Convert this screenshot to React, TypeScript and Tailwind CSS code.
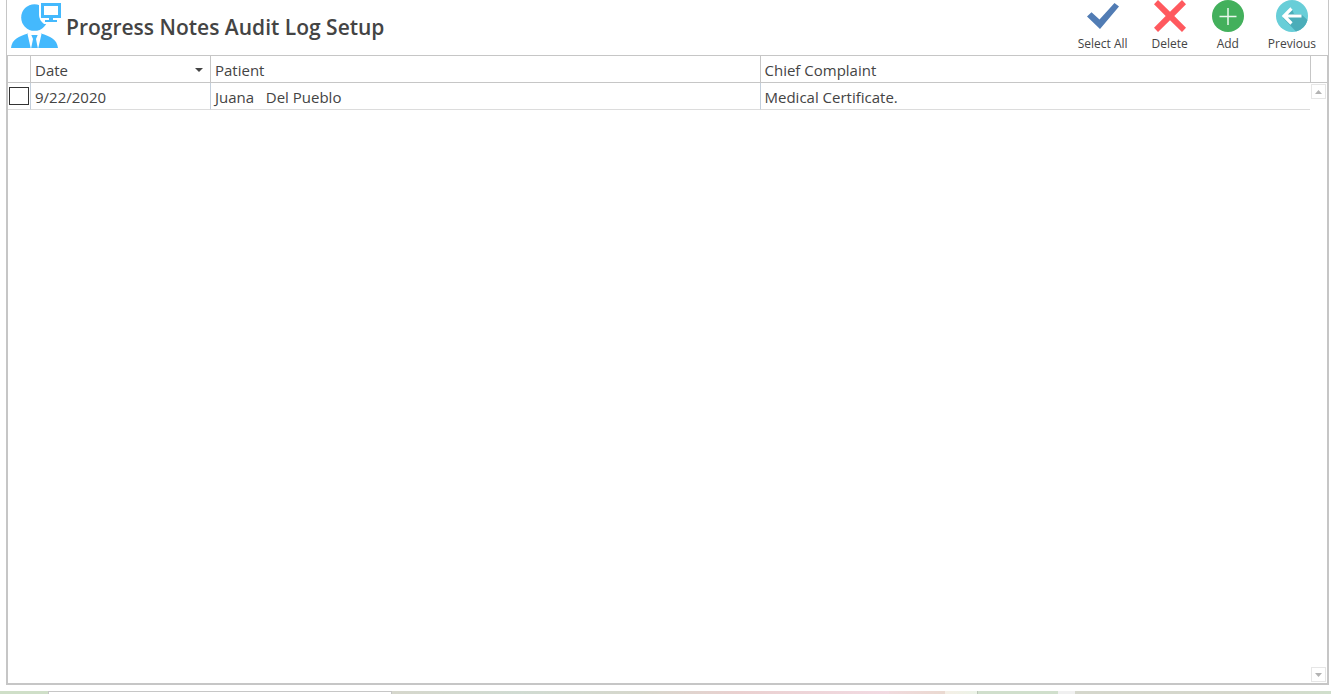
import { useState, type ReactNode } from "react";

type Note = { id: number; date: string; patient: string; complaint: string };

const initialNotes: Note[] = [
  { id: 1, date: "9/22/2020", patient: "Juana   Del Pueblo", complaint: "Medical Certificate." },
];

function DoctorIcon() {
  return (
    <svg width="50" height="46" viewBox="0 0 50 46" className="shrink-0" aria-hidden="true">
      <circle cx="23.500" cy="14.500" r="13.300" fill="#44b9fd" />
      <path d="M0 45C1 36 8 33.500 17 30.500L21 45ZM47 45C46 36 39 33.500 30 30.500L26 45Z" fill="#44b9fd" />
      <path d="M16.500 31H30.500L27.300 45H19.700Z" fill="#fff" />
      <path d="M20.300 32H26.700L25 36L26.800 45H20.200L22 36Z" fill="#44b9fd" />
      <path d="M28 0H50V21H33Q28 17 28 12Z" fill="#fff" />
      <path d="M30 0H50V15H42V17H46V19H34V17H38V15H30ZM33 3V12H47V3Z" fill="#44b9fd" fillRule="evenodd" />
    </svg>
  );
}

function CheckIcon() {
  return (
    <svg width="32" height="32" viewBox="0 0 32 32" aria-hidden="true">
      <path d="M0 16.500L4.500 12.300L12.500 19.500L27.500 3L32 6.500L13 29Z" fill="#517cb4" />
    </svg>
  );
}

function CrossIcon() {
  return (
    <svg width="32" height="32" viewBox="0 0 32 32" aria-hidden="true">
      <path d="M4 0L16 11.800L28 0L32 4.200L20.300 16L32 27.800L28 32L16 20.200L4 32L0 27.800L11.700 16L0 4.200Z" fill="#ff595e" />
    </svg>
  );
}

function AddIcon() {
  return (
    <svg width="32" height="32" viewBox="0 0 32 32" aria-hidden="true">
      <circle cx="16" cy="16" r="16" fill="#43b05c" />
      <path d="M16 8V25M7.500 16.500H24.500" stroke="#e9f7ec" strokeWidth="1.500" />
    </svg>
  );
}

function PreviousIcon() {
  return (
    <svg width="32" height="32" viewBox="0 0 32 32" aria-hidden="true">
      <circle cx="16" cy="16" r="16" fill="#68ced8" />
      <path d="M15.500 8L18 14H25L31.500 20A16 16 0 0 1 20 31.500L7 18Z" fill="#4badb9" />
      <path d="M15.500 8.500L8 16L15.500 23.500M8.500 16H25.500" fill="none" stroke="#fff" strokeWidth="3.200" />
    </svg>
  );
}

function ToolButton({ label, children, onClick }: { label: string; children: ReactNode; onClick?: () => void }) {
  return (
    <button type="button" onClick={onClick} className="flex flex-col items-center gap-1 text-xs leading-4">
      {children}
      <span>{label}</span>
    </button>
  );
}

function ScrollButton({ label, path }: { label: string; path: string }) {
  return (
    <button type="button" aria-label={label} className="flex size-[15px] items-center justify-center border border-[#e6e6e6]">
      <svg width="7" height="4" viewBox="0 0 7 4" aria-hidden="true">
        <path d={path} fill="#b3b3b3" />
      </svg>
    </button>
  );
}

export default function App() {
  const [notes, setNotes] = useState(initialNotes);
  const [selected, setSelected] = useState<number[]>([]);

  const toggle = (id: number) =>
    setSelected((ids) => (ids.includes(id) ? ids.filter((other) => other !== id) : [...ids, id]));

  return (
    <div className="flex h-screen flex-col overflow-hidden bg-white font-['Open_Sans','Noto_Sans',sans-serif] text-[#444]">
      <main className="mr-0.5 ml-1.5 flex min-h-0 flex-1 flex-col">
        <header className="flex h-[55px] shrink-0 items-start justify-between border-x border-[#c6c6c6] pr-3 pl-1">
          <div className="flex items-start gap-[5px] pt-[3px]">
            <DoctorIcon />
            <h1 className="text-[21px] leading-[48px] font-semibold">Progress Notes Audit Log Setup</h1>
          </div>
          <div className="flex gap-6">
            <ToolButton label="Select All" onClick={() => setSelected(notes.map((note) => note.id))}>
              <CheckIcon />
            </ToolButton>
            <ToolButton label="Delete" onClick={() => setNotes(notes.filter((note) => !selected.includes(note.id)))}>
              <CrossIcon />
            </ToolButton>
            <ToolButton label="Add">
              <AddIcon />
            </ToolButton>
            <ToolButton label="Previous">
              <PreviousIcon />
            </ToolButton>
          </div>
        </header>

        <section className="flex min-h-0 flex-1 border-2 border-t border-[#c6c6c6]">
          <div className="min-w-0 flex-1">
            <table className="w-full table-fixed border-separate border-spacing-0 text-left text-[15px] leading-6">
              <thead>
                <tr>
                  <th className="w-[23px] border-r border-b border-[#c6c6c6] p-0" aria-label="Selected" />
                  <th className="w-[180px] border-r border-b border-[#c6c6c6] p-0 font-normal">
                    <button type="button" className="flex w-full items-center justify-between pt-0.5 pr-[7px] pl-1">
                      <span>Date</span>
                      <svg width="8" height="4" viewBox="0 0 8 4" aria-hidden="true">
                        <path d="M0 0H8L4 4Z" fill="#444" />
                      </svg>
                    </button>
                  </th>
                  <th className="border-r border-b border-[#c6c6c6] px-1 pt-0.5 pb-0 font-normal">Patient</th>
                  <th className="border-b border-[#c6c6c6] px-1 pt-0.5 pb-0 font-normal">Chief Complaint</th>
                </tr>
              </thead>
              <tbody>
                {notes.map((note) => (
                  <tr key={note.id}>
                    <td className="border-r border-b border-[#dcdcdc] border-r-[#c3cfdc] p-0">
                      <input
                        type="checkbox"
                        aria-label={`Select note for ${note.patient}`}
                        checked={selected.includes(note.id)}
                        onChange={() => toggle(note.id)}
                        className="ml-px block h-[18px] w-5 appearance-none border border-[#333] bg-white checked:bg-[#517cb4]"
                      />
                    </td>
                    <td className="border-r border-b border-[#dcdcdc] border-r-[#c3cfdc] px-1 pt-0.5 pb-0">{note.date}</td>
                    <td className="border-r border-b border-[#dcdcdc] border-r-[#c3cfdc] px-1 pt-0.5 pb-0 whitespace-pre">{note.patient}</td>
                    <td className="border-b border-[#dcdcdc] px-1 pt-0.5 pb-0">{note.complaint}</td>
                  </tr>
                ))}
              </tbody>
            </table>
          </div>
          <div className="flex w-[17px] flex-col">
            <div className="h-[27px] shrink-0 border-b border-l border-[#c6c6c6]" />
            <div className="flex flex-1 flex-col items-center justify-between py-px">
              <ScrollButton label="Scroll up" path="M0 4H7L3.500 0Z" />
              <ScrollButton label="Scroll down" path="M0 0H7L3.500 4Z" />
            </div>
          </div>
        </section>
      </main>

      <footer className="mt-1.5 flex h-[3px] shrink-0">
        <div className="w-12 bg-[#cfdfc8]" />
        <div className="w-[344px] border-x border-t border-[#c6c6c6] bg-white" />
        <div className="flex flex-1">
          <div className="flex-1 bg-linear-to-r from-[#d6d7cc] via-[#d0dbd2] via-50% to-[#d6d7cc]" />
          <div className="flex-1 bg-linear-to-r from-[#d6d7cc] via-[#ead0d0] via-40% to-[#f2dae2]" />
        </div>
        <div className="w-[56px] bg-linear-to-r from-[#f0dadd] to-[#ead9d0]" />
        <div className="w-[33px] border-r border-[#bcc6b8] bg-linear-to-r from-[#f5efe6] to-[#ebf3e7]" />
        <div className="w-20 bg-[#d0dfcc]" />
        <div className="w-[17px] bg-[#f0f0f0]" />
        <div className="w-64 bg-linear-to-r from-[#d5d7cc] via-[#d5d7cc] via-70% to-[#d0dfcc]" />
      </footer>
    </div>
  );
}
